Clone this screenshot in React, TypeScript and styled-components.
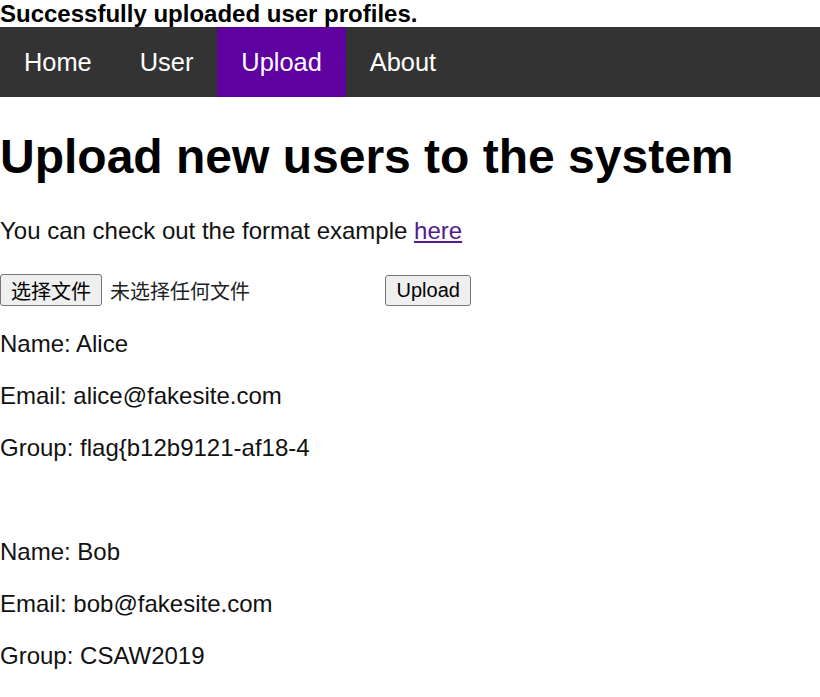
import React from "react";
import styled, { createGlobalStyle } from "styled-components";

const GlobalStyle = createGlobalStyle`
  html, body {
    margin: 0;
    padding: 0;
    background: #ffffff;
  }
  body {
    font-family: "Liberation Sans", Arial, "Noto Sans CJK SC", sans-serif;
    font-size: 24px;
    color: #000000;
  }
`;

const Flash = styled.div`
  font-weight: bold;
  font-size: 24px;
  line-height: 27px;
  margin: 0;
`;

const Nav = styled.nav`
  display: flex;
  background: #333333;
  height: 70px;
`;

const NavLink = styled.a<{ $active?: boolean }>`
  display: block;
  padding: 0 24px;
  line-height: 70px;
  font-size: 25.4px;
  color: #ffffff;
  text-decoration: none;
  background: ${(p) => (p.$active ? "#5f00a0" : "transparent")};
`;

const Main = styled.main`
  display: block;
`;

const Title = styled.h1`
  font-size: 48px;
  font-weight: bold;
  margin: 32px 0 33px;
  line-height: normal;
`;

const Text = styled.p`
  margin: 24px 0;
  font-size: 24px;
  line-height: normal;
  color: #111111;
`;

const Link = styled.a`
  color: #551a8b;
  text-decoration: underline;
`;

const UploadForm = styled.form`
  display: flex;
  align-items: flex-end;
  box-sizing: border-box;
  height: 37px;
  margin: 24px 0;
`;

const FilePicker = styled.label`
  display: flex;
  align-items: center;
  gap: 8px;
  width: 379px;
  font-family: "Liberation Sans", "Noto Sans CJK SC", sans-serif;
  font-size: 20px;
  color: #222222;
`;

const PickButton = styled.span`
  display: inline-flex;
  align-items: center;
  box-sizing: border-box;
  height: 32px;
  padding: 0 10px;
  background: #efefef;
  border: 1px solid #767676;
  border-radius: 3px;
  font-family: "Liberation Sans", "Noto Sans CJK SC", sans-serif;
  font-size: 20px;
  color: #000000;
`;

const SubmitButton = styled.button`
  box-sizing: border-box;
  height: 31px;
  margin-left: 6px;
  padding: 0 10.5px;
  background: #efefef;
  border: 1px solid #767676;
  border-radius: 3px;
  font-family: "Liberation Sans", Arial, sans-serif;
  font-size: 20px;
  color: #000000;
  cursor: pointer;
`;

const UserCard = styled.div`
  & + & {
    margin-top: 76px;
  }
`;

const users = [
  { name: "Alice", email: "alice@fakesite.com", group: "flag{b12b9121-af18-4" },
  { name: "Bob", email: "bob@fakesite.com", group: "CSAW2019" },
];

export default function App() {
  return (
    <>
      <GlobalStyle />
      <Flash>Successfully uploaded user profiles.</Flash>
      <Nav>
        <NavLink href="#">Home</NavLink>
        <NavLink href="#">User</NavLink>
        <NavLink href="#" $active>
          Upload
        </NavLink>
        <NavLink href="#">About</NavLink>
      </Nav>
      <Main>
        <Title>Upload new users to the system</Title>
        <Text>
          You can check out the format example <Link href="#">here</Link>
        </Text>
        <UploadForm onSubmit={(e) => e.preventDefault()}>
          <FilePicker>
            <PickButton>选择文件</PickButton>
            <span>未选择任何文件</span>
          </FilePicker>
          <SubmitButton type="submit">Upload</SubmitButton>
        </UploadForm>
        {users.map((u) => (
          <UserCard key={u.name}>
            <Text>Name: {u.name}</Text>
            <Text>Email: {u.email}</Text>
            <Text>Group: {u.group}</Text>
          </UserCard>
        ))}
      </Main>
    </>
  );
}
